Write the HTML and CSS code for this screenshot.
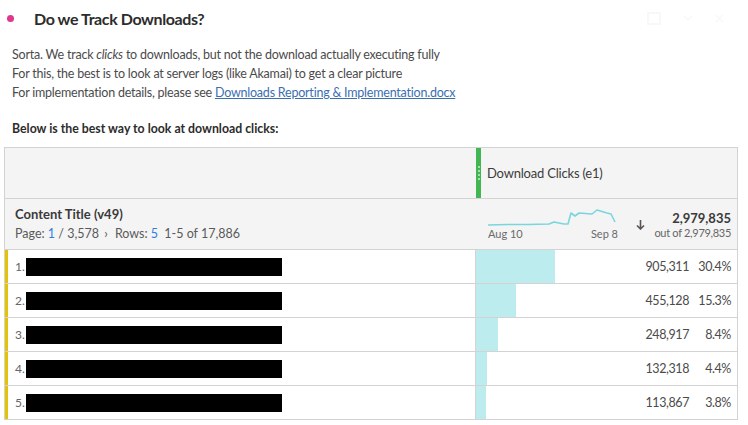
FILE: index.html
```html
<!DOCTYPE html>
<html>
<head>
<meta charset="utf-8">
<link rel="stylesheet" href="styles.css">
</head>
<body>
<div class="page">
  <div class="heading">
    <span class="dot"></span>
    <h1 class="title">Do we Track Downloads?</h1>
    <div class="tools">
      <svg width="14" height="13" viewBox="0 0 14 13"><rect x="1" y="1" width="12" height="11" fill="none" stroke="#f8f8f8" stroke-width="2"/></svg>
      <svg width="10" height="6" viewBox="0 0 10 6"><path d="M1 1l4 4 4-4" fill="none" stroke="#f8f8f8" stroke-width="1.5"/></svg>
      <svg width="9" height="9" viewBox="0 0 9 9"><path d="M1 1l7 7M8 1l-7 7" fill="none" stroke="#f8f8f8" stroke-width="1.5"/></svg>
    </div>
  </div>
  <div class="text">
    <p class="lines">Sorta. We track <em>clicks</em> to downloads, but not the download actually executing fully<br>For this, the best is to look at server logs (like Akamai) to get a clear picture<br>For implementation details, please see <a href="#">Downloads Reporting &amp; Implementation.docx</a></p>
    <p class="lead">Below is the best way to look at download clicks:</p>
  </div>
  <div class="table">
    <div class="row head1">
      <div class="left"></div>
      <div class="right metric-head">
        <span class="grip"><i></i><i></i><i></i><i></i></span>
        <span class="metric-name">Download Clicks (e1)</span>
      </div>
    </div>
    <div class="row head2">
      <div class="left dim">
        <div class="dim-name">Content Title (v49)</div>
        <div class="pager">Page: <span class="blue">1</span> / 3,578 <span class="chev">›</span> <span class="gap">Rows:</span> <span class="blue">5</span> <span class="range">1-5 of 17,886</span></div>
      </div>
      <div class="right summary">
        <div class="spark">
          <svg width="130" height="20" viewBox="0 0 130 20">
            <polyline points="0,16 20,15.5 40,15.5 61,15 66,13 76,15 80,15 83,4 87,7 91,4 104,5 109,1 119,4 123,5 127,13" fill="none" stroke="#79d6dd" stroke-width="1.6" stroke-linejoin="round"/>
          </svg>
          <div class="spark-labels"><span>Aug 10</span><span>Sep 8</span></div>
        </div>
        <svg class="arrow" width="9" height="10" viewBox="0 0 9 10"><path d="M4.5 0v9M1 5.5l3.5 3.5 3.5-3.5" fill="none" stroke="#555" stroke-width="1.6"/></svg>
        <div class="total">
          <div class="total-num">2,979,835</div>
          <div class="total-of">out of 2,979,835</div>
        </div>
      </div>
    </div>
    <div class="row data">
      <div class="left item"><span class="num">1.</span><span class="redact"></span></div>
      <div class="right cell"><span class="bar" style="width:30.4%"></span><span class="val">905,311</span><span class="pct">30.4%</span></div>
    </div>
    <div class="row data">
      <div class="left item"><span class="num">2.</span><span class="redact"></span></div>
      <div class="right cell"><span class="bar" style="width:15.3%"></span><span class="val">455,128</span><span class="pct">15.3%</span></div>
    </div>
    <div class="row data">
      <div class="left item"><span class="num">3.</span><span class="redact"></span></div>
      <div class="right cell"><span class="bar" style="width:8.4%"></span><span class="val">248,917</span><span class="pct">8.4%</span></div>
    </div>
    <div class="row data">
      <div class="left item"><span class="num">4.</span><span class="redact"></span></div>
      <div class="right cell"><span class="bar" style="width:4.4%"></span><span class="val">132,318</span><span class="pct">4.4%</span></div>
    </div>
    <div class="row data">
      <div class="left item"><span class="num">5.</span><span class="redact"></span></div>
      <div class="right cell"><span class="bar" style="width:3.8%"></span><span class="val">113,867</span><span class="pct">3.8%</span></div>
    </div>
  </div>
</div>
</body>
</html>
```
FILE: styles.css
```css
* { box-sizing: border-box; }
html, body { margin: 0; padding: 0; background: #fff; }
body {
  font-family: Lato, "Open Sans", sans-serif;
  color: #4b4b4b;
  font-size: 13px;
}
.page { width: 748px; height: 425px; overflow: hidden; }

.heading {
  display: flex;
  align-items: center;
  height: 36px;
  padding-left: 7px;
}
.dot {
  width: 7px; height: 7px; border-radius: 50%;
  background: #e0368c;
  flex: none;
}
.title {
  margin: 0 0 0 20px;
  font-size: 16px;
  font-weight: 700;
  color: #2c2c2c;
  letter-spacing: -0.4px;
}
.tools {
  margin-left: auto;
  margin-right: 24px;
  display: flex;
  align-items: center;
  gap: 22px;
}

.text { padding: 9px 0 0 12px; }
.lines {
  margin: 0;
  line-height: 19px;
  font-size: 12.5px;
  letter-spacing: -0.22px;
  color: #4b4b4b;
}
.lines a { color: #3b6faf; text-decoration: underline; }
.lead {
  margin: 18px 0 0;
  font-weight: 700;
  font-size: 12.3px;
  color: #2c2c2c;
  line-height: 17px;
}

.table {
  margin: 10px 0 0 4px;
  width: 734px;
  border: 1px solid #d3d3d3;
  border-bottom: 0;
}
.row {
  display: grid;
  grid-template-columns: 470px 1fr;
  border-bottom: 1px solid #d3d3d3;
}
.head1 { height: 51px; background: #f4f4f4; }
.head2 { height: 51px; background: #f4f4f4; }
.data { height: 34px; }

.metric-head {
  display: flex;
  align-items: center;
}
.grip {
  width: 5px;
  height: 100%;
  background: #41b653;
  margin-left: 1px;
  display: flex;
  flex-direction: column;
  align-items: center;
  justify-content: center;
  gap: 2px;
}
.grip i {
  display: block;
  width: 2px; height: 2px;
  border-radius: 50%;
  background: #c7ecc9;
}
.metric-name {
  margin-left: 6px;
  font-size: 13px;
  letter-spacing: -0.2px;
  color: #3c3c3c;
}

.dim { padding: 7px 0 0 10px; }
.dim-name { font-weight: 700; font-size: 13px; color: #3a3a3a; line-height: 17px; }
.pager { font-size: 12.5px; color: #5a5a5a; margin-top: 2px; line-height: 17px; }
.blue { color: #2d7fe0; }
.chev { margin: 0 4px 0 2px; }
.range { margin-left: 3px; }

.summary {
  display: flex;
  align-items: flex-start;
  padding: 10px 6px 0 13px;
}
.spark { width: 130px; }
.spark svg { display: block; }
.spark-labels {
  display: flex;
  justify-content: space-between;
  font-size: 11px;
  color: #6a6a6a;
  margin-top: -2px;
  line-height: 13px;
}
.arrow { margin: 11px 0 0 18px; }
.total { margin-left: auto; text-align: right; white-space: nowrap; }
.total-num { font-weight: 700; font-size: 13px; color: #3a3a3a; line-height: 16px; margin-top: 1px; }
.total-of { font-size: 11px; color: #666; line-height: 14px; letter-spacing: -0.3px; }

.item {
  display: flex;
  align-items: center;
  border-left: 3px solid #e6c300;
  padding-left: 7px;
}
.num { font-size: 12px; color: #666; width: 11px; }
.redact {
  display: block;
  width: 256px;
  height: 18px;
  background: #000;
}
.cell {
  position: relative;
  border-left: 1px solid #d3d3d3;
  display: flex;
  align-items: center;
  justify-content: flex-end;
  padding-right: 6px;
  font-size: 12.5px;
  letter-spacing: -0.4px;
  color: #4b4b4b;
}
.bar {
  position: absolute;
  left: 0; top: 0; bottom: 0;
  background: #bdecee;
}
.val { position: relative; }
.pct { position: relative; width: 42px; text-align: right; }
```
